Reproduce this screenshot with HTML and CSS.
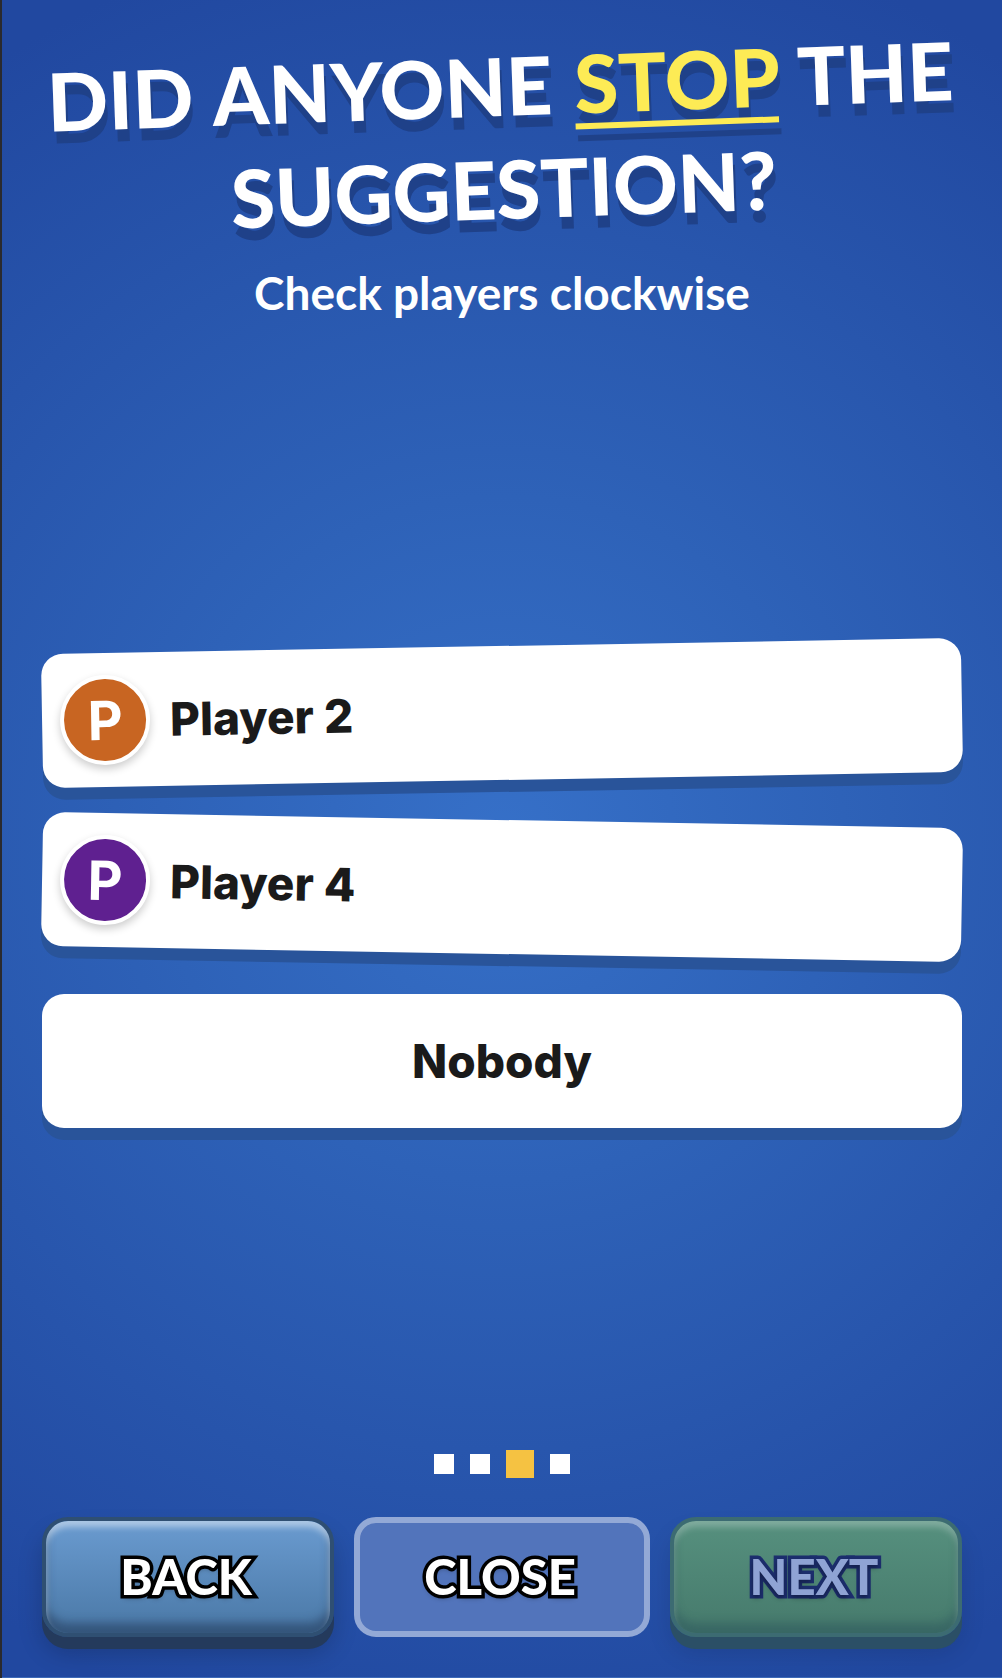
FILE: index.html
```html
<!DOCTYPE html>
<html lang="en">
<head>
    <meta charset="UTF-8">
    <meta name="viewport" content="width=device-width, initial-scale=1.0">
    <title>Did anyone stop the suggestion?</title>
    <link rel="stylesheet" href="styles.css">
</head>
<body>
    <div class="screen">
        <header class="header">
            <h1 class="title">Did anyone <span class="highlight">stop</span> the suggestion?</h1>
            <p class="subtitle">Check players clockwise</p>
        </header>

        <main class="choices">
            <button class="choice tilt-up">
                <span class="avatar orange">P</span>
                <span>Player 2</span>
            </button>
            <button class="choice tilt-down">
                <span class="avatar purple">P</span>
                <span>Player 4</span>
            </button>
            <button class="choice nobody">Nobody</button>
        </main>

        <div class="steps">
            <span class="step"></span>
            <span class="step"></span>
            <span class="step active"></span>
            <span class="step"></span>
        </div>

        <nav class="nav">
            <button class="nav-btn back">Back</button>
            <button class="nav-btn close">Close</button>
            <button class="nav-btn next" disabled>Next</button>
        </nav>
    </div>
</body>
</html>
```

FILE: styles.css
```css
* {
    margin: 0;
    padding: 0;
    box-sizing: border-box;
}

html,
body {
    height: 100%;
}

body {
    background: #2a2a2e;
    font-family: 'Lato', 'Noto Sans', sans-serif;
    overflow: hidden;
}

.screen {
    height: 1678px;
    margin-left: 2px;
    padding: 0 40px 28px;
    display: flex;
    flex-direction: column;
    background: radial-gradient(circle at 50% 50%, #3670c8 0%, #2e62b8 35%, #2148a0 95%);
    border-bottom: 1px solid #3d6ab8;
}

.header {
    padding-top: 34px;
    text-align: center;
    color: white;
}

.title {
    font-size: 80px;
    font-weight: 900;
    line-height: 103px;
    word-spacing: 3px;
    text-transform: uppercase;
    transform: rotate(-2deg);
    text-shadow: 2px 12px 0 #1f4189;
}

.highlight {
    color: #fdeb55;
    text-decoration: underline;
    text-decoration-thickness: 6px;
    text-underline-offset: 10px;
}

.subtitle {
    margin-top: 25px;
    font-size: 46px;
    font-weight: 700;
}

.choices {
    flex: 1;
    display: flex;
    flex-direction: column;
    justify-content: center;
    gap: 40px;
    padding-top: 4px;
}

.choice {
    height: 134px;
    padding: 0 18px;
    display: flex;
    align-items: center;
    gap: 20px;
    border: none;
    border-radius: 22px;
    background: white;
    color: #1a1a1a;
    font-family: 'Inter', sans-serif;
    font-size: 46px;
    font-weight: 800;
    box-shadow: 0 12px 0 #29549a;
}

.tilt-up {
    transform: rotate(-1deg);
}

.tilt-down {
    transform: rotate(1deg);
}

.nobody {
    justify-content: center;
}

.avatar {
    width: 90px;
    height: 90px;
    display: grid;
    place-items: center;
    border: 4px solid white;
    border-radius: 50%;
    color: white;
    font-size: 54px;
    font-weight: 700;
    box-shadow: 0 4px 8px rgba(0, 0, 0, 0.2);
}

.orange {
    background: #c86522;
}

.purple {
    background: #5f2090;
}

.steps {
    display: flex;
    align-items: center;
    justify-content: center;
    gap: 16px;
    margin-bottom: 39px;
}

.step {
    width: 20px;
    height: 20px;
    background: white;
}

.step.active {
    width: 28px;
    height: 28px;
    background: #f5c242;
}

.nav {
    display: grid;
    grid-template-columns: 1fr 296px 1fr;
    gap: 20px;
    margin-bottom: 12px;
}

.nav-btn {
    height: 120px;
    padding: 0 4px 3px 0;
    border-radius: 26px;
    font-family: 'Lato', sans-serif;
    font-size: 49px;
    font-weight: 900;
    text-transform: uppercase;
    color: white;
    -webkit-text-stroke: 7px black;
    paint-order: stroke fill;
    text-shadow: 0 3px 5px rgba(0, 0, 0, 0.35);
}

.back {
    border: 4px solid #2f4f72;
    background: linear-gradient(#6a9bd0, #4a78a6);
    box-shadow:
        inset 0 6px 6px rgba(255, 255, 255, 0.45),
        inset 0 -10px 10px rgba(30, 50, 80, 0.5),
        0 12px 0 #243a5c,
        0 16px 24px rgba(0, 0, 0, 0.2);
}

.close {
    border: 6px solid #93a9d6;
    border-radius: 22px;
    background: #5274bb;
}

.next {
    border: 4px solid #3c6b72;
    background: linear-gradient(#56907e, #467a6c);
    color: #8fa3d4;
    -webkit-text-stroke-color: #1c2e6e;
    box-shadow:
        inset 0 6px 6px rgba(255, 255, 255, 0.25),
        inset 0 -10px 10px rgba(40, 80, 90, 0.45),
        0 12px 0 #2b4f66,
        0 16px 24px rgba(0, 0, 0, 0.12);
}
```
